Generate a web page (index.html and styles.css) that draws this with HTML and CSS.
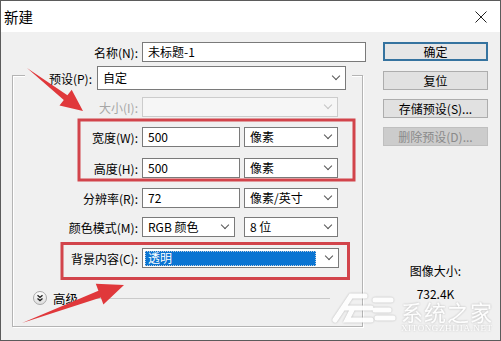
FILE: index.html
```html
<!DOCTYPE html>
<html>
<head>
<meta http-equiv="Content-Type" content="text/html; charset=utf-8"/>
<title>新建</title>
<link rel="stylesheet" href="styles.css">
</head>
<body>
<div class="window">
  <div class="titlebar">
    <span class="title">新建</span>
    <svg class="close" width="12" height="12" viewBox="0 0 12 12">
      <path d="M0.5 0.5 L11.5 11.5 M11.5 0.5 L0.5 11.5" stroke="#222" stroke-width="1" fill="none"/>
    </svg>
  </div>

  <div class="body">
    <div class="main">
      <div class="row row-name">
        <span class="lbl">名称(N):</span>
        <div class="field w-name">未标题-1</div>
      </div>

      <div class="group">
        <div class="row row-preset">
          <span class="lbl">预设(P):</span>
          <div class="field w-preset">自定<i class="chev"></i></div>
        </div>

        <div class="row row-size off">
          <span class="lbl">大小(I):</span>
          <div class="field w-full"><i class="chev"></i></div>
        </div>

        <div class="row row-width">
          <span class="lbl">宽度(W):</span>
          <div class="field w-num">500</div>
          <div class="field w-unit">像素<i class="chev"></i></div>
        </div>

        <div class="row row-height">
          <span class="lbl">高度(H):</span>
          <div class="field w-num">500</div>
          <div class="field w-unit">像素<i class="chev"></i></div>
        </div>

        <div class="row row-res">
          <span class="lbl">分辨率(R):</span>
          <div class="field w-num">72</div>
          <div class="field w-unit">像素/英寸<i class="chev"></i></div>
        </div>

        <div class="row row-mode">
          <span class="lbl">颜色模式(M):</span>
          <div class="field w-mode">RGB 颜色<i class="chev"></i></div>
          <div class="field w-unit">8 位<i class="chev"></i></div>
        </div>

        <div class="row row-bg">
          <span class="lbl">背景内容(C):</span>
          <div class="field w-bg"><span class="picked">透明</span><i class="chev"></i></div>
        </div>

        <div class="row row-adv">
          <svg class="adv-icon" width="14" height="14" viewBox="0 0 14 14">
            <defs>
              <linearGradient id="knob" x1="0" y1="0" x2="0" y2="1">
                <stop offset="0" stop-color="#ffffff"/>
                <stop offset="1" stop-color="#dcdcdc"/>
              </linearGradient>
            </defs>
            <circle cx="7" cy="7" r="6.5" fill="url(#knob)" stroke="#a8a8a8"/>
            <path d="M4.5 4.2 L7 6.4 L9.5 4.2 M4.5 7.4 L7 9.6 L9.5 7.4" stroke="#222" stroke-width="1.3" fill="none"/>
          </svg>
          <span class="adv-text">高级</span>
          <span class="adv-line"></span>
        </div>
      </div>
    </div>

    <div class="side">
      <div class="btn btn-default">确定</div>
      <div class="btn btn-reset">复位</div>
      <div class="btn btn-save">存储预设(S)...</div>
      <div class="btn btn-del">删除预设(D)...</div>
      <div class="info">
        <div>图像大小:</div>
        <div class="info-size">732.4K</div>
      </div>
    </div>
  </div>

  <!-- annotations drawn on top of the screenshot -->
  <svg class="marks" width="501" height="341" viewBox="0 0 501 341">
    <rect x="79" y="120" width="275" height="60" fill="none" stroke="#d2444b" stroke-width="3"/>
    <rect x="62" y="243.5" width="286.5" height="35" fill="none" stroke="#d2444b" stroke-width="3"/>
    <polygon points="27,68 67.4,95.2 71.7,89.7 83,111 59.5,105.5 63.8,100" fill="#e0383b"/>
    <polygon points="22,323 98.4,290.8 95.8,283.8 124,285 103.4,304.4 100.8,297.4" fill="#e0383b"/>
  </svg>

  <div class="watermark">
    <svg class="wm-logo" width="66" height="34" viewBox="0 0 66 34">
      <path d="M4 30 L20 6 L34 6 M14 18 L40 18 M22 18 L16 30 L40 30 M44 10 L60 10 M44 20 L58 20 M46 28 L62 28" stroke="#fff" stroke-width="5" fill="none" stroke-linecap="round"/>
    </svg>
    <div class="wm-text">
      <div class="wm-cn">系统之家</div>
      <div class="wm-en">XITONGZHIJIA.NET</div>
    </div>
  </div>
</div>
</body>
</html>
```

FILE: styles.css
```css
* {
  box-sizing: border-box;
}

html, body {
  margin: 0;
  padding: 0;
}

body {
  font-family: "Noto Sans CJK SC", "Microsoft YaHei", sans-serif;
  font-size: 12px;
  color: #000;
  background: #fff;
}

.window {
  position: relative;
  width: 501px;
  height: 341px;
  border: 1px solid #5b5b5b;
  background: #f0f0f0;
  overflow: hidden;
}

.titlebar {
  height: 31px;
  background: #fff;
  display: flex;
  align-items: center;
  padding-left: 3px;
}

.title {
  font-size: 14.5px;
}

.close {
  margin-left: auto;
  margin-right: 13px;
  margin-top: 1px;
}

.body {
  display: flex;
  padding: 10px 0 0 11px;
}

.main {
  width: 354px;
}

/* form rows */
.row {
  display: flex;
  align-items: center;
  height: 20px;
}

.lbl {
  width: 125px;
  margin-right: 4px;
  text-align: right;
  white-space: nowrap;
}

.row-name .lbl {
  width: 126px;
}

.field {
  height: 20px;
  display: flex;
  align-items: center;
  padding-left: 5px;
  background: #fff;
  border: 1px solid #7a7a7a;
  white-space: nowrap;
  line-height: 18px;
}

.chev {
  width: 6px;
  height: 6px;
  margin-left: auto;
  margin-right: 6px;
  border-right: 1px solid #555;
  border-bottom: 1px solid #555;
  transform: translateY(-2px) rotate(45deg);
}

.w-name { width: 224px; }
.w-preset { width: 249px; height: 24px; }
.w-full { width: 196px; }
.w-num { width: 98px; }
.w-unit { width: 94px; margin-left: 4px; }
.w-mode { width: 93px; }
.row-mode .w-unit { margin-left: 9px; }
.w-bg { width: 197px; padding-left: 2px; }

.picked {
  width: 171px;
  height: 15px;
  padding-left: 3px;
  line-height: 14px;
  color: #fff;
  background: #0a74d2;
  outline: 1px dotted #bcd;
  outline-offset: -1px;
}

/* group box */
.group {
  width: 351px;
  margin-top: 13px;
  padding-bottom: 21px;
  border: 1px solid #b4b4b4;
  box-shadow: inset 1px 1px 0 #fff, 1px 1px 0 #fff;
}

.row-preset {
  height: 24px;
  margin: -10px 10px 0 12px;
  background: #f0f0f0;
}

.row-preset .lbl {
  width: 67px;
  margin-right: 5px;
}

.row-size { margin-top: 7px; }
.row-width { margin-top: 10px; }
.row-height { margin-top: 11px; }
.row-res { margin-top: 10px; }
.row-mode { margin-top: 9px; }
.row-bg { margin-top: 11px; }

.off .lbl {
  color: #a6a6a6;
}

.off .field {
  background: #f6f6f6;
  border-color: #cccccc;
}

.off .chev {
  border-color: #c4c4c4;
}

.row-adv {
  height: 14px;
  margin-top: 23px;
  padding-left: 20px;
}

.adv-text {
  margin-left: 6px;
  font-size: 12.5px;
}

.adv-line {
  flex: 1;
  margin: 0 32px 0 6px;
  border-top: 1px solid #cacaca;
}

/* buttons */
.side {
  width: 105px;
  margin-left: 17px;
  display: flex;
  flex-direction: column;
}

.btn {
  height: 19px;
  border: 1px solid #adadad;
  background: #e1e1e1;
  text-align: center;
  line-height: 17px;
  white-space: nowrap;
}

.btn-default {
  border: 2px solid #35739f;
  background: #e6e6e6;
  line-height: 15px;
}

.btn-reset { margin-top: 10px; }
.btn-save { margin-top: 9px; }

.btn-del {
  margin-top: 9px;
  background: #cccccc;
  border-color: #bfbfbf;
  color: #8a8a8a;
}

.info {
  margin-top: 117px;
  text-align: center;
  line-height: 16px;
}

.info-size {
  margin-top: 9px;
  line-height: 12px;
}

/* overlays */
.marks {
  position: absolute;
  left: -1px;
  top: -1px;
  pointer-events: none;
}

.watermark {
  position: absolute;
  left: 330px;
  top: 299px;
  display: flex;
  align-items: flex-start;
  opacity: 0.92;
  filter: drop-shadow(0 0 1px rgba(0, 0, 0, 0.25));
}

.wm-logo {
  margin-top: -10px;
}

.wm-text {
  margin-left: 4px;
}

.wm-cn {
  font-size: 22px;
  line-height: 22px;
  color: #fff;
  letter-spacing: 1px;
}

.wm-en {
  margin-top: 1px;
  font-family: "Liberation Serif", serif;
  font-size: 9px;
  line-height: 10px;
  color: #fff;
  letter-spacing: 0.6px;
}
```
